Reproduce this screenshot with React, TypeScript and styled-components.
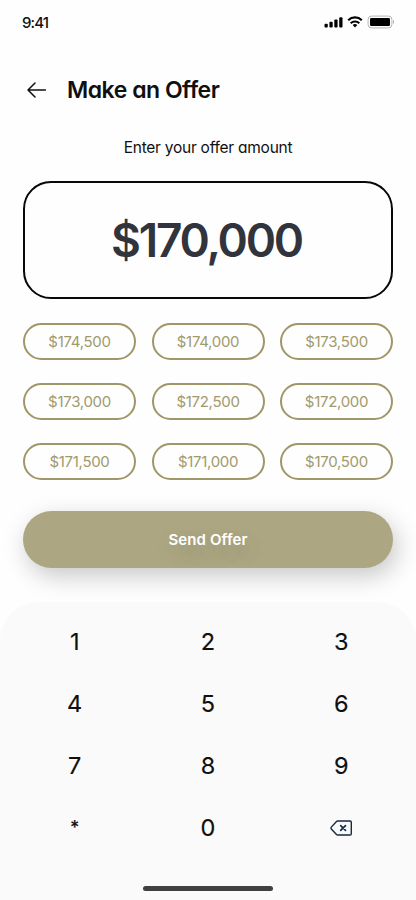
import React from 'react';
import styled, { createGlobalStyle } from 'styled-components';

const GlobalStyle = createGlobalStyle`
  *, *::before, *::after { box-sizing: border-box; }
  body { margin: 0; background: #fefefe; }
  button { margin: 0; padding: 0; border: 0; background: none; color: inherit; font: inherit; letter-spacing: inherit; cursor: pointer; }
`;

const Screen = styled.div`
  display: flex;
  flex-direction: column;
  width: 416px;
  height: 900px;
  overflow: hidden;
  background: #fefefe;
  color: #101010;
  font-family: Inter, 'Liberation Sans', sans-serif;
  font-feature-settings: 'cv11' 1;
`;

const StatusBar = styled.header`
  display: flex;
  justify-content: space-between;
  align-items: center;
  height: 44px;
  padding: 0 22px;
`;

const Time = styled.span`
  font-size: 15px;
  font-weight: 500;
  letter-spacing: -0.9px;
`;

const Indicators = styled.svg`
  width: 70px;
  height: 14px;
`;

const TitleBar = styled.div`
  display: flex;
  align-items: center;
  gap: 20px;
  height: 92px;
  padding: 0 27px;
`;

const BackButton = styled.button`
  width: 20px;
  height: 18px;
  svg { display: block; }
`;

const Title = styled.h1`
  margin: 0;
  font-size: 23px;
  font-weight: 600;
  letter-spacing: -0.48px;
  white-space: nowrap;
`;

const Content = styled.main`
  display: flex;
  flex-direction: column;
  padding: 0 23px;
`;

const Prompt = styled.p`
  margin: 0;
  height: 45px;
  line-height: 23px;
  font-size: 15.5px;
  letter-spacing: -0.25px;
  text-align: center;
`;

const AmountBox = styled.div`
  display: flex;
  align-items: center;
  justify-content: center;
  height: 118px;
  padding-right: 3px;
  border: 2px solid #080808;
  border-radius: 28px;
  color: #31343d;
  font-size: 46px;
  font-weight: 600;
  letter-spacing: -2.2px;
`;

const Suggestions = styled.div`
  display: grid;
  grid-template-columns: repeat(3, 1fr);
  grid-auto-rows: 37px;
  gap: 23.3px 15.5px;
  margin-top: 23.6px;
`;

const Chip = styled.button`
  && {
    border: 2px solid #9f9769;
    border-radius: 19px;
    color: #a19a6d;
    font-size: 15px;
    letter-spacing: -0.3px;
  }
`;

const SendButton = styled.button`
  && {
    height: 57px;
    margin-top: 31px;
    border-radius: 28.5px;
    background: #aca782;
    box-shadow: 4px 8px 24px rgba(0, 0, 0, 0.22);
    color: #fff;
    font-size: 15px;
    font-weight: 600;
    letter-spacing: 0.1px;
    text-shadow: 4px 8px 24px rgba(0, 0, 0, 0.22);
  }
`;

const Keypad = styled.section`
  display: flex;
  flex-direction: column;
  align-items: center;
  justify-content: space-between;
  flex: none;
  height: 298px;
  margin-top: auto;
  padding: 8px 8px 9px;
  border-radius: 38px 38px 0 0;
  background: #fafafa;
`;

const Keys = styled.div`
  display: grid;
  grid-template-columns: repeat(3, 1fr);
  grid-auto-rows: 62.2px;
  width: 100%;
`;

const Key = styled.button<{ $small?: boolean }>`
  && {
    display: flex;
    align-items: center;
    justify-content: center;
    font-size: ${({ $small }) => ($small ? '18px' : '23.5px')};
    font-weight: ${({ $small }) => ($small ? 500 : 400)};
    -webkit-text-stroke: 0.15px currentColor;
  }
`;

const HomeIndicator = styled.div`
  width: 130px;
  height: 5px;
  border-radius: 3px;
  background: #404040;
`;

const offers = [
  '$174,500', '$174,000', '$173,500',
  '$173,000', '$172,500', '$172,000',
  '$171,500', '$171,000', '$170,500',
];
const keys = ['1', '2', '3', '4', '5', '6', '7', '8', '9', '*', '0'];

const StatusIcons = () => (
  <Indicators viewBox="0 0 70 14" aria-hidden="true">
    <g fill="#000">
      <rect x="0.5" y="8.7" width="3.3" height="3.8" rx="1" />
      <rect x="5.4" y="6.7" width="3.3" height="5.8" rx="1" />
      <rect x="10.3" y="4.5" width="3.3" height="8" rx="1" />
      <rect x="15.2" y="2.3" width="3.3" height="10.2" rx="1" />
      <path d="M28.7 10 31 12.4l2.3-2.4a3.4 3.4 0 0 0-4.6 0z" />
    </g>
    <g fill="none" stroke="#000" strokeWidth="2.1">
      <path d="M24.2 5.2a9.7 9.7 0 0 1 13.6 0" />
      <path d="M26.7 8.2a6.2 6.2 0 0 1 8.6 0" />
    </g>
    <rect x="44.1" y="1.1" width="23.8" height="11.8" rx="3.4" fill="none" stroke="#b5b5b5" />
    <path d="M69 5v4c1.3-.7 1.3-3.3 0-4z" fill="#aaa" />
    <rect x="46" y="3" width="20" height="8" rx="1.3" fill="#000" />
  </Indicators>
);

const App = () => (
  <>
    <GlobalStyle />
    <Screen>
      <StatusBar>
        <Time>9:41</Time>
        <StatusIcons />
      </StatusBar>
      <TitleBar>
        <BackButton aria-label="Back">
          <svg width="20" height="18" viewBox="0 0 20 18" fill="none" stroke="#101010" strokeWidth="1.5" strokeLinecap="round" strokeLinejoin="round">
            <path d="M18.4 9H1M8 2 1 9l7 7" />
          </svg>
        </BackButton>
        <Title>Make an Offer</Title>
      </TitleBar>
      <Content>
        <Prompt>Enter your offer amount</Prompt>
        <AmountBox>$170,000</AmountBox>
        <Suggestions>
          {offers.map((offer) => <Chip key={offer}>{offer}</Chip>)}
        </Suggestions>
        <SendButton>Send Offer</SendButton>
      </Content>
      <Keypad>
        <Keys>
          {keys.map((key) => <Key key={key} $small={key === '*'}>{key}</Key>)}
          <Key aria-label="Delete">
            <svg width="24" height="18" viewBox="0 0 24 18" fill="none" stroke="#172940" strokeWidth="1.4" strokeLinecap="round" strokeLinejoin="round">
              <path d="M8.6 2H21q1.3 0 1.3 1.3v11.4q0 1.3-1.3 1.3H8.6Q8 16 7.5 15.5L2.3 9.9Q1.5 9 2.3 8.1L7.5 2.5Q8 2 8.6 2Z" />
              <path d="m11.7 6.6 4.8 4.8m0-4.8-4.8 4.8" strokeWidth="1.6" />
            </svg>
          </Key>
        </Keys>
        <HomeIndicator />
      </Keypad>
    </Screen>
  </>
);

export default App;
